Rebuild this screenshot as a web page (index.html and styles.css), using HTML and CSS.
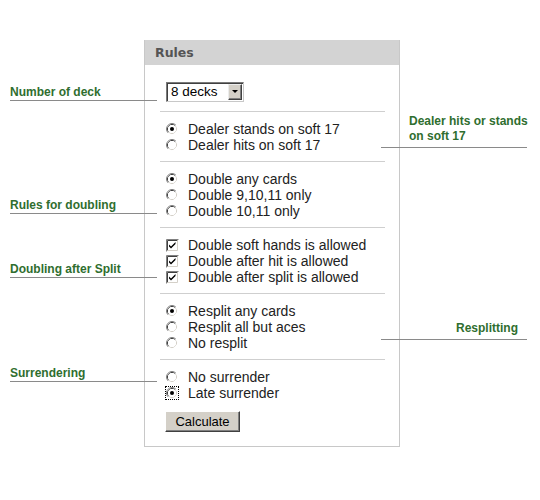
FILE: index.html
```html
<!DOCTYPE html>
<html>
<head>
<meta charset="utf-8">
<link rel="stylesheet" href="styles.css">
</head>
<body>
<svg class="defs" width="0" height="0" aria-hidden="true">
  <symbol id="radio" viewBox="0 0 12 12">
    <path d="M2.11 9.89A5.5 5.5 0 0 1 9.89 2.11" fill="none" stroke="#808080"/>
    <path d="M9.89 2.11A5.5 5.5 0 0 1 2.11 9.89" fill="none" stroke="#ffffff"/>
    <path d="M2.82 9.18A4.5 4.5 0 0 1 9.18 2.82" fill="none" stroke="#404040"/>
    <path d="M9.18 2.82A4.5 4.5 0 0 1 2.82 9.18" fill="none" stroke="#d4d0c8"/>
    <circle cx="6" cy="6" r="4" fill="#fff"/>
  </symbol>
  <symbol id="box" viewBox="0 0 13 13">
    <rect x="0" y="0" width="13" height="13" fill="#ffffff"/>
    <path d="M0.5 12.5V0.5H12.5" fill="none" stroke="#808080"/>
    <path d="M1.5 11.5V1.5H11.5" fill="none" stroke="#404040"/>
    <path d="M1.5 11.5H11.5V1.5" fill="none" stroke="#d4d0c8"/>
    <rect x="2" y="2" width="9" height="9" fill="#ffffff"/>
  </symbol>
</svg>

<div class="stage">
  <div class="panel">
    <div class="head">Rules</div>

    <div class="sec first">
      <div class="sel">
        <select class="decks"><option>8 decks</option><option>6 decks</option><option>4 decks</option><option>2 decks</option><option>1 deck</option></select>
        <span class="arrow"><svg width="8" height="4" viewBox="0 0 8 4"><path d="M1 0H7L4 3Z" fill="#000"/></svg></span>
      </div>
    </div>

    <div class="sec">
      <div class="row"><span class="ic"><svg width="12" height="12"><use href="#radio"/><circle cx="6" cy="6" r="2" fill="#000"/></svg></span>Dealer stands on soft 17</div>
      <div class="row"><span class="ic"><svg width="12" height="12"><use href="#radio"/></svg></span>Dealer hits on soft 17</div>
    </div>

    <div class="sec">
      <div class="row"><span class="ic"><svg width="12" height="12"><use href="#radio"/><circle cx="6" cy="6" r="2" fill="#000"/></svg></span>Double any cards</div>
      <div class="row"><span class="ic"><svg width="12" height="12"><use href="#radio"/></svg></span>Double 9,10,11 only</div>
      <div class="row"><span class="ic"><svg width="12" height="12"><use href="#radio"/></svg></span>Double 10,11 only</div>
    </div>

    <div class="sec">
      <div class="row"><span class="ic"><svg width="13" height="13"><use href="#box"/><path d="M3 5.5L5 7.5L9.5 3V5L5 9.5L3 7.5Z" fill="#000"/></svg></span>Double soft hands is allowed</div>
      <div class="row"><span class="ic"><svg width="13" height="13"><use href="#box"/><path d="M3 5.5L5 7.5L9.5 3V5L5 9.5L3 7.5Z" fill="#000"/></svg></span>Double after hit is allowed</div>
      <div class="row"><span class="ic"><svg width="13" height="13"><use href="#box"/><path d="M3 5.5L5 7.5L9.5 3V5L5 9.5L3 7.5Z" fill="#000"/></svg></span>Double after split is allowed</div>
    </div>

    <div class="sec">
      <div class="row"><span class="ic"><svg width="12" height="12"><use href="#radio"/><circle cx="6" cy="6" r="2" fill="#000"/></svg></span>Resplit any cards</div>
      <div class="row"><span class="ic"><svg width="12" height="12"><use href="#radio"/></svg></span>Resplit all but aces</div>
      <div class="row"><span class="ic"><svg width="12" height="12"><use href="#radio"/></svg></span>No resplit</div>
    </div>

    <div class="sec last">
      <div class="row"><span class="ic"><svg width="12" height="12"><use href="#radio"/></svg></span>No surrender</div>
      <div class="row"><span class="ic focus"><svg width="12" height="12"><use href="#radio"/><circle cx="6" cy="6" r="2" fill="#000"/></svg></span>Late surrender</div>
      <button class="btn" type="button">Calculate</button>
    </div>
  </div>

  <div class="note left n1">Number of deck</div>
  <div class="note left n2">Rules for doubling</div>
  <div class="note left n3">Doubling after Split</div>
  <div class="note left n4">Surrendering</div>
  <div class="note right n5">Dealer hits or stands<br>on soft 17</div>
  <div class="note right n6">Resplitting</div>
</div>
</body>
</html>
```

FILE: styles.css
```css
html, body {
  margin: 0;
  padding: 0;
  background: #ffffff;
}

body {
  font-family: "Liberation Sans", Arial, sans-serif;
  font-size: 13px;
  color: #222;
}

.defs {
  position: absolute;
  width: 0;
  height: 0;
  overflow: hidden;
}

.stage {
  position: relative;
  width: 540px;
  height: 500px;
  padding-top: 40px;
  box-sizing: border-box;
}

.panel {
  width: 254px;
  margin-left: 144px;
  border: 1px solid #c8c8c8;
  border-top: none;
}

.head {
  height: 25px;
  background: #d3d3d3;
  padding-left: 10px;
  font-family: "DejaVu Sans", Verdana, sans-serif;
  font-weight: bold;
  font-size: 12.5px;
  line-height: 25px;
  color: #555;
}

.sec {
  margin: 0 14px 0 15px;
  border-top: 1px solid #cfcfcf;
  padding: 9px 0 8px 6px;
}

.sec.first {
  border-top: none;
  padding: 17px 0 9px 6px;
}

.sec.last {
  padding-bottom: 14px;
}

.row {
  display: flex;
  align-items: center;
  height: 16px;
  font-size: 14px;
  line-height: 16px;
  white-space: nowrap;
}

.ic {
  width: 13px;
  height: 13px;
  margin-right: 9px;
  display: flex;
  align-items: center;
  justify-content: flex-start;
}

.ic svg {
  display: block;
}

.ic.focus svg {
  outline: 1px dotted #000;
  outline-offset: 0;
}

.sel {
  position: relative;
  width: 78px;
  height: 20px;
}

.decks {
  appearance: none;
  -webkit-appearance: none;
  width: 78px;
  height: 20px;
  margin: 0;
  padding: 0 0 0 4px;
  border: 1px solid #7a7a7a;
  border-right-color: #c8c8c8;
  border-bottom-color: #c8c8c8;
  box-shadow: inset 1px 1px 0 #404040;
  border-radius: 0;
  background: #fff;
  font-family: "Liberation Sans", Arial, sans-serif;
  font-size: 13.5px;
  color: #000;
  line-height: 18px;
  outline: none;
}

.arrow {
  position: absolute;
  right: 2px;
  top: 2px;
  width: 14px;
  height: 16px;
  box-sizing: border-box;
  background: #d4d0c8;
  border-top: 1px solid #ececec;
  border-left: 1px solid #ececec;
  border-right: 1px solid #404040;
  border-bottom: 1px solid #404040;
  box-shadow: inset -1px -1px 0 #808080;
  display: flex;
  align-items: center;
  justify-content: center;
  pointer-events: none;
}

.btn {
  display: block;
  margin: 10px 0 0 -1px;
  width: 75px;
  height: 21px;
  padding: 0;
  background: #d4d0c8;
  border-top: 1px solid #ffffff;
  border-left: 1px solid #ffffff;
  border-right: 1px solid #404040;
  border-bottom: 1px solid #404040;
  box-shadow: inset -1px -1px 0 #808080;
  border-radius: 0;
  font-family: "Liberation Sans", Arial, sans-serif;
  font-size: 13px;
  color: #000;
}

.note {
  position: absolute;
  font-family: "Liberation Sans", Arial, sans-serif;
  font-weight: bold;
  font-size: 12px;
  line-height: 14px;
  color: #2f6e2f;
  border-bottom: 1px solid #8a8a8a;
  white-space: nowrap;
}

.note.left {
  left: 10px;
  width: 147px;
  padding-bottom: 1px;
}

.n1 { top: 85px; }
.n2 { top: 198px; }
.n3 { top: 262px; }
.n4 { top: 366px; }

.note.right {
  left: 381px;
  width: 146px;
  box-sizing: border-box;
}

.n5 {
  top: 114px;
  line-height: 15px;
  padding: 0 0 3px 28px;
}

.n6 {
  top: 321px;
  text-align: right;
  padding: 0 9px 4px 0;
}
```
